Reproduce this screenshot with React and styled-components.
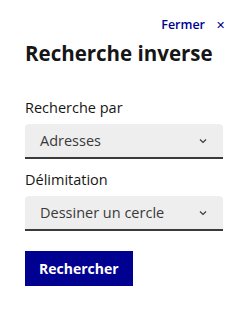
import React from 'react';
import styled, { createGlobalStyle } from 'styled-components';

const GlobalStyle = createGlobalStyle`
  html, body {
    margin: 0;
    padding: 0;
    background: #fff;
  }
  body {
    font-family: "Open Sans", "Noto Sans", sans-serif;
    color: #161616;
  }
`;

function Chevron() {
  return (
    <svg width="8" height="6" viewBox="0 0 8 6" aria-hidden="true">
      <path d="M1 1.5 L4 4.5 L7 1.5" fill="none" stroke="#3a3a3a" strokeWidth="1.2" />
    </svg>
  );
}

function Field({ label, value }) {
  return (
    <StyledField>
      <StyledLabel>{label}</StyledLabel>
      <StyledSelect>
        <span>{value}</span>
        <Chevron />
      </StyledSelect>
    </StyledField>
  );
}

function App() {
  return (
    <>
      <GlobalStyle />
      <StyledPanel>
        <StyledTopBar>
          <StyledClose>
            Fermer <StyledCross>✕</StyledCross>
          </StyledClose>
        </StyledTopBar>
        <StyledTitle>Recherche inverse</StyledTitle>
        <Field label="Recherche par" value="Adresses" />
        <Field label="Délimitation" value="Dessiner un cercle" />
        <StyledButton>Rechercher</StyledButton>
      </StyledPanel>
    </>
  );
}

const StyledPanel = styled.div`
  width: 248px;
  height: 329px;
  box-sizing: border-box;
  padding: 18px 25px 0 25px;
  display: flex;
  flex-direction: column;
`;

const StyledTopBar = styled.div`
  display: flex;
  justify-content: flex-end;
  margin-right: -2px;
`;

const StyledClose = styled.button`
  display: flex;
  align-items: center;
  gap: 11px;
  border: none;
  background: none;
  padding: 0;
  font-family: inherit;
  font-size: 12.5px;
  font-weight: 600;
  color: #000091;
  line-height: 14px;
`;

const StyledCross = styled.span`
  font-size: 11px;
  font-weight: 400;
`;

const StyledTitle = styled.h1`
  margin: 8px 0 0 0;
  font-size: 20.5px;
  font-weight: 700;
  line-height: 26px;
  color: #161616;
`;

const StyledField = styled.div`
  display: flex;
  flex-direction: column;
`;

const StyledLabel = styled.div`
  margin-top: 33px;
  font-size: 14.5px;
  line-height: 18px;
  color: #161616;
  ${StyledField} + ${StyledField} & {
    margin-top: 12px;
  }
`;

const StyledSelect = styled.div`
  margin-top: 7px;
  height: 33px;
  box-sizing: content-box;
  display: flex;
  align-items: center;
  justify-content: space-between;
  padding: 0 16px 0 15px;
  background: #eeeeee;
  border-radius: 4px 4px 0 0;
  border-bottom: 2px solid #3a3a3a;
  font-size: 14.5px;
  color: #3a3a3a;
`;

const StyledButton = styled.button`
  align-self: flex-start;
  margin-top: 20px;
  height: 35px;
  padding: 0 14px;
  border: none;
  background: #000091;
  color: #fff;
  font-family: inherit;
  font-size: 14px;
  font-weight: 700;
`;

export default App;
